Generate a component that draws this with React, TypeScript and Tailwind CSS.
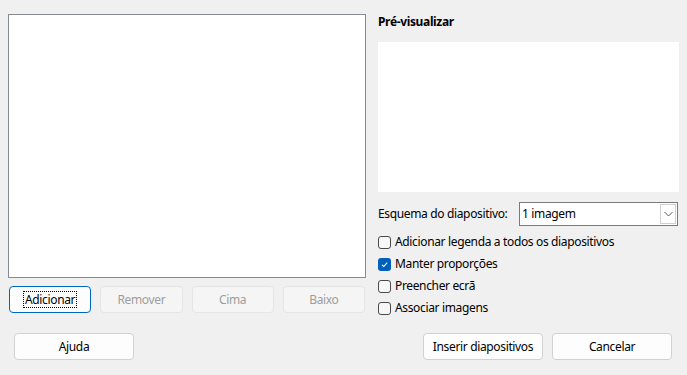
import React from "react";

const FONT = "font-['Segoe_UI','Noto_Sans',sans-serif] text-[12px] tracking-[-0.35px]";

function Btn({ label, disabled, focused }: { label: string; disabled?: boolean; focused?: boolean }) {
  return (
    <button
      disabled={disabled}
      className={`h-[27px] rounded-[4px] border flex items-center justify-center ${
        focused
          ? "border-[#0067c0] bg-[#fdfdfd] text-black"
          : disabled
          ? "border-[#e5e5e5] bg-[#f5f5f5] text-[#9d9d9d]"
          : "border-[#d1d1d1] bg-[#fdfdfd] text-black"
      }`}
    >
      {focused ? (
        <span className="border border-dotted border-black leading-[15px] px-[1px]">{label}</span>
      ) : (
        label
      )}
    </button>
  );
}

function Check({ label, checked }: { label: string; checked?: boolean }) {
  return (
    <label className="flex items-center h-[22px] gap-[4px]">
      <span
        className={`w-[13px] h-[13px] rounded-[3px] flex items-center justify-center ${
          checked ? "bg-[#005fb8]" : "border border-[#4a4a4a] bg-[#f7f7f7]"
        }`}
      >
        {checked && (
          <svg width="9" height="9" viewBox="0 0 9 9" fill="none">
            <path d="M2 4.8 L3.8 6.5 L7.2 2.6" stroke="white" strokeWidth="1.1" />
          </svg>
        )}
      </span>
      <span>{label}</span>
    </label>
  );
}

export default function App() {
  return (
    <div className={`w-[687px] h-[375px] bg-[#f0f0f0] text-black pt-[14px] ${FONT}`}>
      <div className="flex h-[319px]">
        {/* list + buttons */}
        <div className="ml-[8px] w-[358px] flex flex-col">
          <div className="h-[264px] bg-white border border-[#868a91]" />
          <div className="mt-[8px] grid grid-cols-4 gap-x-[9px] px-[1px]">
            <Btn label="Adicionar" focused />
            <Btn label="Remover" disabled />
            <Btn label="Cima" disabled />
            <Btn label="Baixo" disabled />
          </div>
        </div>

        {/* preview */}
        <div className="ml-[12px] w-[301px] flex flex-col">
          <div className="h-[16px] font-bold leading-[16px]">Pré-visualizar</div>
          <div className="mt-[12px] h-[150px] bg-white" />
          <div className="mt-[10px] h-[24px] flex items-center">
            <span className="w-[141px]">Esquema do diapositivo:</span>
            <div className="w-[159px] h-[24px] bg-white border border-[#7a7a7a] flex items-center">
              <span className="flex-1 pl-[2px]">1 imagem</span>
              <span className="w-[16px] h-[20px] mr-[1px] border border-[#d0d0d0] flex items-center justify-center">
                <svg width="9" height="6" viewBox="0 0 9 6" fill="none">
                  <path d="M0.5 1 L4.5 5 L8.5 1" stroke="#606060" strokeWidth="1" />
                </svg>
              </span>
            </div>
          </div>
          <div className="mt-[5px] flex flex-col">
            <Check label="Adicionar legenda a todos os diapositivos" />
            <Check label="Manter proporções" checked />
            <Check label="Preencher ecrã" />
            <Check label="Associar imagens" />
          </div>
        </div>
      </div>

      <div className="flex items-center px-[14px] pr-[15px]">
        <div className="w-[120px] grid">
          <Btn label="Ajuda" />
        </div>
        <div className="ml-auto flex gap-[9px]">
          <div className="w-[120px] grid">
            <Btn label="Inserir diapositivos" />
          </div>
          <div className="w-[120px] grid">
            <Btn label="Cancelar" />
          </div>
        </div>
      </div>
    </div>
  );
}
